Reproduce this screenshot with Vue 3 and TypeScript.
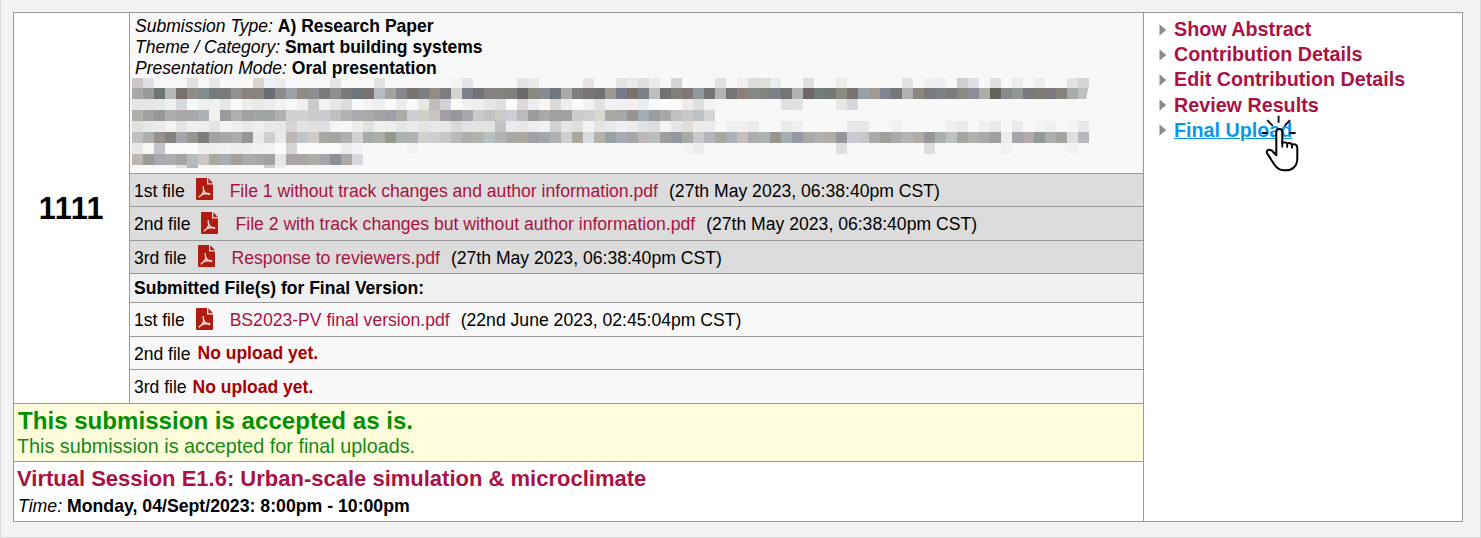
<script setup lang="ts">
interface Cell { x: number; y: number; h: number; fill: string }
interface FileRow { label: string; name?: string; date?: string; kind: string }

const before: FileRow[] = [
  { label: '1st file', name: 'File 1 without track changes and author information.pdf', date: '(27th May 2023, 06:38:40pm CST)', kind: 'r1' },
  { label: '2nd file', name: 'File 2 with track changes but without author information.pdf', date: '(27th May 2023, 06:38:40pm CST)', kind: 'r2' },
  { label: '3rd file', name: 'Response to reviewers.pdf', date: '(27th May 2023, 06:38:40pm CST)', kind: 'r3' },
]
const finals: FileRow[] = [
  { label: '1st file', name: 'BS2023-PV final version.pdf', date: '(22nd June 2023, 02:45:04pm CST)', kind: 'r4' },
  { label: '2nd file', kind: 'r5' },
  { label: '3rd file', kind: 'r6' },
]
const links = ['Show Abstract', 'Contribution Details', 'Edit Contribution Details', 'Review Results', 'Final Upload']

// Pixelated block: "-" is an empty cell, "-n" skips n cells, two digits are a grey level.
const rows: string[] = [
  'cdc8c5 dee0e6 -3 e1e1df - e6 -3 d9d4d0 ecf1f4 eb -4 e4e6e4 -3 e2 -6 f5f4ed e3e4e9 -4 e7e4e5 e9ebe9 -4 e7e4e5 -2 e4 eb dde0df eb - d6 -3 dfe2e0 - efeeed dadddb dedfd9 eaedee -2 e1dee0 f7f9f8 - ebebea -5 e1 - f1efee ecedef - cf dfdfe5 - dfe0df - eb - ed -2 e3e2e1 d3d5d5',
  'a8a8a6 9b9a98 6e7675 b6b6b9 77726d 928b88 838c8e 757c7f 7c7a79 929391 8a827d 8b837e 6a6e72 8c8c8b 9ca0a9 928b82 8d8f90 7a 8d908c 7a7978 6b737b 7a716e b8bbc4 a6a39e 87878d 78736e 7b7f82 948b83 7d7c82 d5d4cc 7b8089 727374 888282 828481 82807d 6c696d 888a80 898a8f 72767f a9a9a8 7e7e7c 797374 707171 9a9993 777a88 7b7269 7c8289 bdbec0 727370 7f8178 807875 8f989d 717674 b7b2b3 747576 8e8079 838986 81847d 7b7f88 777573 b1b4b3 706468 727c79 777776 8a8982 79726e 99a1a8 a29993 81858f 767675 aeb2b1 8d887f 7c7b7b 7b828a 7b7c7c 8b8b82 8c8f9b adada8 62635b 8a898e 929797 78797e 7f7b76 7c7a80 87827c a6abae bfc1bf',
  'e5e6e3 e5 e7e8ea ef d8d9da - ee f0f1f1 e7e7e9 fa efeeee e9e8e7 ebeced f0f3f2 f8 ef c9c9ca f3 e6e6e7 dcdce0 fa f3 ef fa ed fa e8e7e3 bebdbc d2d3d6 fa f0 ee e7 dee1e2 f9fbfa dedad9 ebedf0 f8f5f3 d9d9da ebefef fa f2f1ef e1e1e0 eff0f4 eff0f2 f2f0ef eaeef0 fa fa fa eeebea dfdfe0 f3f4f6 -6 e1dfde e0e2e4 -3 e9e7e6 d7d8da',
  'b0afab a1a0a2 97989a afaeae a8a7a8 a8a7a9 abb1b4 f2f1ec 9a999d b0 a39fa2 a3a4a4 9fa4a3 afb1b1 d0cfd1 d2d1d0 cccacc cacbd0 bfbfbb b0b4b5 aaa9ad aaaba6 a6a2a1 9da0a7 aaaca7 cccfd1 cecec5 c8c4c1 a09ea3 97979a a5a9ad cacbca c4c2c0 cdcbc7 cbced6 bdb9bc 9a9c9b a9abaa a09f9f a0 cccacb cfced0 dad8cf a8aaa6 a7a7a9 979391 a4adb3 9b9d9c aaa8a6 c0c3c6 cbc8c5 bfc3c7 d5d5d6',
  'e3dfdd e6e8e9 eaebee f3f3f0 e5 ecf0f1 f0edec e3 f4 eeefee e9e9ea ee eae9e9 e9e7e7 d5 e2e5e3 e3dfdb dce0e4 f5 f5 eeeeec e1 f0 ee e4e7e6 eb e5e4e2 e7e8ea e7e7e9 d9dad7 e1e3e1 e1e4e2 e3e4e0 c2 e9ecef e9e7e6 ebedef eff1f3 d0 e5 de f3 e5e4e2 e7e9eb eff0f4 edeceb e1e1e2 dd f4f4f1 e7e7ea e0dfdc eeecea eaebee - f0 f0 ea -2 e9ebea f0 -4 e9e8e9 e5e7e9 -2 f1 -4 f0efed e8eaec - f0 ea - ea - f3 ef - f5f4f2 e6e8eb',
  'c1c0c1 abacab 97918c 838482 a2a7aa 96978f 7c7c7e a2a2a1 a7a8a5 ab 96969a e5ebeb d2cecf e9e9ec bdb7b4 bec5c8 d0ccca a5a9a3 a2a6a2 b1b0ae d1d1ce a5aba8 abafa8 97998f adb2b3 b0b0b5 d1d1cd cccfd1 cac6c4 b9 adaead b3b2ad b9c0c2 b5b2b2 a7aba8 ada7a2 a29fa6 a1a7ac b0b0ae ce aba69e d6dee0 b4b2aa 99a1a1 a8abb5 a6a6a7 bdb6b9 b8bdbd 9b9c9b 9496a0 a8aaa6 c8c9cf b4b4ba a9a79e abb0bb c5c1be acacad adb2b0 96968e a4adb0 9799a2 aaaaa8 b0 b1aba6 96959b c9ccd3 c8c7ca a8acb1 a09f9a a7acaa b6b4b2 b0aaa5 96969b abb0b1 bec2c0 a3a6a3 b0b0ad a9a8ab 9f9da2 ecece8 a5a6ab b2a9ad 929996 acadae a5a5a0 dfdddd b7b8bb',
  'e8 f8f9f7 c5c3ca fa fa fa ee ecefed f0 ed ee f1 f2 fa d6d6d4 fa fa fa fa eeecea f2f4f7 -4 f4f3f0 -24 f6f4f2 ebecef -12 df -7 dd -6 f2 -5 f1f3f2',
  'beb8b5 9c9b98 a7a8b1 adacae a5a4a6 b9bcbe cdc8c6 a9a99f a9aeb3 a3a09f acabaf a5a9a7 a3a39e e3e7ea aaa5a2 a7a7a8 b0aea4 a6a5ad 8c909b aca9a6 d8d9df',
  '-4 e8e3e1 b3b8bc -6 cf eb',
]
const cells: Cell[] = []
rows.forEach((row, r) => {
  let col = 0
  const y = r === 0 ? 0 : 10 + (r - 1) * 11
  const h = r === 0 ? 10 : r === 8 ? 3 : 11
  for (const token of row.split(' ')) {
    if (token[0] === '-') {
      col += token.length > 1 ? Number(token.slice(1)) : 1
      continue
    }
    cells.push({ x: col * 11, y, h, fill: '#' + (token.length === 2 ? token.repeat(3) : token) })
    col++
  }
})
</script>

<template>
  <div class="page">
    <div class="sheet">
      <div class="left">
        <div class="top">
          <div class="num"><span>1111</span></div>
          <div class="main">
            <div class="info">
              <p><i>Submission Type:</i> <b>A) Research Paper</b></p>
              <p><i>Theme / Category:</i> <b>Smart building systems</b></p>
              <p><i>Presentation Mode:</i> <b>Oral presentation</b></p>
              <svg class="mosaic" width="957" height="90" viewBox="0 0 957 90" shape-rendering="crispEdges">
                <rect v-for="(c, i) in cells" :key="i" :x="c.x" :y="c.y" width="11" :height="c.h" :fill="c.fill" />
                <path d="M957 7v14h-3z" fill="#f8f8f8" shape-rendering="auto" />
              </svg>
            </div>
            <div v-for="f in before" :key="f.kind" class="row grey" :class="f.kind">
              <span class="label">{{ f.label }}</span>
              <svg class="pdf" width="17" height="22" viewBox="0 0 17 22">
                <path d="M1 0H11V6.5H17V21Q17 22 16 22H1Q0 22 0 21V1Q0 0 1 0Z" fill="#b01c10" />
                <path d="M12.3 0L17 5.2H12.3Z" fill="#b01c10" />
                <path d="M7.2 8.8C7.2 10.5 7.6 12.3 8.4 13.6C9.4 15.2 11 16.2 13.6 16.5M7.9 12.6C7 15.4 5.4 17.6 3.2 18.9M5.4 16.8C8 15.6 10.6 15.2 13.6 15.6" fill="none" stroke="#ecd9d6" stroke-width="1.4" stroke-linecap="round" />
              </svg>
              <span class="name">{{ f.name }}</span>
              <span class="date">{{ f.date }}</span>
            </div>
            <div class="row subhead"><b>Submitted File(s) for Final Version:</b></div>
            <div v-for="f in finals" :key="f.kind" class="row" :class="f.kind">
              <span class="label">{{ f.label }}</span>
              <template v-if="f.name">
                <svg class="pdf" width="17" height="22" viewBox="0 0 17 22">
                  <path d="M1 0H11V6.5H17V21Q17 22 16 22H1Q0 22 0 21V1Q0 0 1 0Z" fill="#b01c10" />
                  <path d="M12.3 0L17 5.2H12.3Z" fill="#b01c10" />
                  <path d="M7.2 8.8C7.2 10.5 7.6 12.3 8.4 13.6C9.4 15.2 11 16.2 13.6 16.5M7.9 12.6C7 15.4 5.4 17.6 3.2 18.9M5.4 16.8C8 15.6 10.6 15.2 13.6 15.6" fill="none" stroke="#f5e6e3" stroke-width="1.4" stroke-linecap="round" />
                </svg>
                <span class="name">{{ f.name }}</span>
                <span class="date">{{ f.date }}</span>
              </template>
              <b v-else class="none">No upload yet.</b>
            </div>
          </div>
        </div>
        <div class="status">
          <p class="accepted">This submission is accepted as is.</p>
          <p class="note">This submission is accepted for final uploads.</p>
        </div>
        <div class="session">
          <p class="title">Virtual Session E1.6: Urban-scale simulation &amp; microclimate</p>
          <p class="time"><i>Time:</i> <b>Monday, 04/Sept/2023: 8:00pm - 10:00pm</b></p>
        </div>
      </div>
      <div class="actions">
        <div v-for="(l, i) in links" :key="l" class="action">
          <svg width="8" height="14" viewBox="0 0 8 14"><path d="M.5 1.3L7.2 7L.5 12.7Z" fill="#8b8b8b" /></svg>
          <a :class="{ hot: i === 4 }">{{ l }}</a>
        </div>
        <svg class="hand" width="42" height="60" viewBox="0 0 42 60">
          <path d="M19.3 40.2V17.3C19.3 13 25.3 13 25.3 17.3V28C27.3 27 29.5 27.4 30.2 28.6C32 27.6 34 28.2 34.9 29.6C37.5 28.8 40.3 29.5 40.3 33V43.5C40.3 51 35.5 55.3 29 55.3H27C22.5 55.3 19.5 52.8 17.3 49.5L10.3 38.6C8.4 35.5 12 33.3 15 35.8Z" fill="#fff" stroke="#000" stroke-width="2" stroke-linejoin="round" />
          <path d="M25.3 27V32.5M30.2 28.5V32.7M35 29.6V33.6M21.6 .8V7.8M10.2 5.2L15.8 10.8M33.1 5.2L27.5 10.8M4.8 18H11M32.4 18H38.6" stroke="#000" stroke-width="1.8" fill="none" />
        </svg>
      </div>
    </div>
  </div>
</template>

<style>
body { margin: 0; }
</style>

<style scoped>
.page {
  box-sizing: border-box;
  width: 1481px;
  height: 538px;
  padding: 12px 0 0 12px;
  background: #f2f2f2;
  border: 1px solid #d9d9d9;
  border-top: 0;
  font-family: "Liberation Sans", Arial, sans-serif;
  font-size: 17.53px;
  color: #000;
}
p { margin: 0; white-space: pre; }
.sheet {
  box-sizing: border-box;
  display: flex;
  width: 1450px;
  height: 510px;
  border: 1px solid #999;
  background: #fff;
}
.left { width: 1129px; border-right: 1px solid #999; }
.top { display: flex; height: 390px; border-bottom: 1px solid #999; }
.num {
  width: 115px;
  display: flex;
  align-items: center;
  justify-content: center;
  font-size: 30.6px;
  letter-spacing: .6px;
  font-weight: bold;
  border-right: 1px solid #999;
}
.main { flex: 1; background: #f8f8f8; }
.info { height: 157px; padding: 3px 0 0 2px; border-bottom: 1px solid #999; }
.info p { height: 21px; line-height: 21px; padding-left: 3px; }
.mosaic { display: block; margin-top: -1px; }
.row {
  display: flex;
  align-items: center;
  box-sizing: border-box;
  height: 33px;
  padding: 1px 0 0 4px;
  border-bottom: 1px solid #999;
  white-space: nowrap;
}
.grey { background: #dcdcdc; }
.r2, .r4 { height: 34px; }
.r6 { height: 33px; border-bottom: 0; }
.r1, .r2, .r3, .r4 { padding-top: 2px; }
.r5, .r6 { padding-top: 2px; }
.subhead { height: 29px; padding-top: 0; background: #f1f1f1; }
.pdf { margin: -4px 17px 0 11px; flex: none; }
.name { color: #a81343; margin-right: 11px; font-size: 17.6px; }
.date { font-size: 17.6px; }
.none { color: #a80000; margin: -2px 0 0 7px; }
.r6 .none { margin: 0 0 0 6px; }
.status { height: 57px; background: #fffcdc; border-bottom: 1px solid #999; }
.accepted { height: 33px; line-height: 34px; padding-left: 4px; font-size: 24.1px; font-weight: bold; color: #009000; }
.note { height: 20px; line-height: 18px; padding-left: 3px; font-size: 19.8px; color: #148a14; }
.title { line-height: 34px; height: 31px; padding-left: 3px; font-size: 22px; font-weight: bold; color: #a81343; }
.time { line-height: 26px; padding-left: 4px; font-size: 17.7px; }
.actions { position: relative; padding: 4px 0 0 15px; }
.action { display: flex; align-items: center; height: 25.2px; font-size: 19.73px; font-weight: bold; color: #a81343; white-space: nowrap; }
.action svg { margin: 0 7px 0 0; }
.hot { color: #0a98e8; text-decoration: underline; text-decoration-thickness: 1px; }
.hand { position: absolute; left: 113px; top: 102px; }
</style>
